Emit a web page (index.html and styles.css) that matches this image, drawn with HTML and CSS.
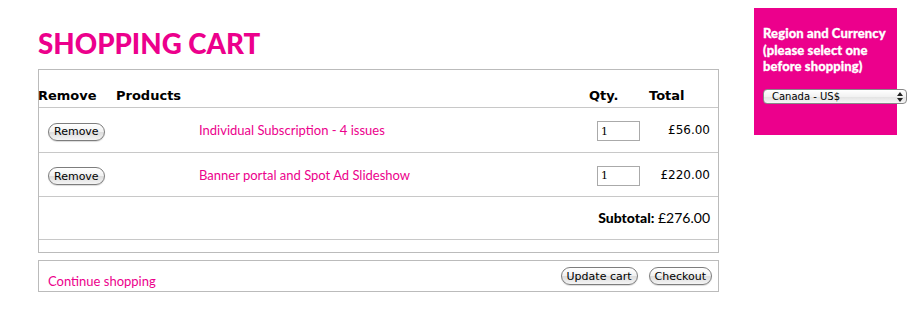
FILE: index.html
```html
<!DOCTYPE html>
<html lang="en">
<head>
  <meta charset="UTF-8" />
  <title>Shopping Cart</title>
  <link rel="stylesheet" href="styles.css">
</head>
<body>
  <div class="page">
    <div class="main">
      <h1 class="title">SHOPPING CART</h1>

      <div class="cart-box">
        <div class="cart-head">
          <span class="h-remove">Remove</span>
          <span class="h-products">Products</span>
          <span class="h-qty">Qty.</span>
          <span class="h-total">Total</span>
        </div>

        <div class="cart-row">
          <div class="c-remove"><button class="mac-btn">Remove</button></div>
          <div class="c-product"><a href="#">Individual Subscription - 4 issues</a></div>
          <div class="c-qty"><input type="text" value="1" /></div>
          <div class="c-total">£56.00</div>
        </div>

        <div class="cart-row">
          <div class="c-remove"><button class="mac-btn">Remove</button></div>
          <div class="c-product"><a href="#">Banner portal and Spot Ad Slideshow</a></div>
          <div class="c-qty"><input type="text" value="1" /></div>
          <div class="c-total">£220.00</div>
        </div>

        <div class="cart-subtotal">
          <strong>Subtotal:</strong> £276.00
        </div>
        <div class="cart-empty"></div>
      </div>

      <div class="actions-box">
        <a href="#" class="continue">Continue shopping</a>
        <div class="action-buttons">
          <button class="mac-btn">Update cart</button>
          <button class="mac-btn">Checkout</button>
        </div>
      </div>
    </div>

    <div class="sidebar">
      <p class="region-label">Region and Currency (please select one before shopping)</p>
      <div class="select-wrap">
        <select class="region-select">
          <option>Canada - US$</option>
        </select>
        <svg class="select-arrows" width="6" height="10" viewBox="0 0 6 10">
          <path d="M0 4 L3 0 L6 4 Z M0 6 L3 10 L6 6 Z" fill="#222"/>
        </svg>
      </div>
    </div>
  </div>
</body>
</html>
```

FILE: styles.css
```css
body {
  margin: 0;
  background: #fff;
  font-family: 'Lato', sans-serif;
  color: #000;
}
.page {
  display: flex;
  align-items: flex-start;
}
.main {
  margin-left: 38px;
  width: 681px;
}
.title {
  margin: 0;
  padding-top: 29px;
  height: 40px;
  font-size: 27.7px;
  font-weight: 900;
  line-height: 30px;
  color: #ec008c;
}
.cart-box {
  border: 1px solid #bbb;
}
.cart-head {
  display: flex;
  align-items: flex-end;
  height: 38px;
  border-bottom: 1px solid #c8c8c8;
  font-family: 'DejaVu Sans', sans-serif;
  font-weight: bold;
  font-size: 13px;
  line-height: 16px;
  padding-bottom: 3px;
  box-sizing: border-box;
}
.h-remove {
  margin-left: -1px;
  width: 78px;
}
.h-products {
  flex: 1;
}
.h-qty {
  width: 60px;
}
.h-total {
  width: 69px;
}
.cart-row {
  display: flex;
  align-items: center;
  height: 44px;
  border-bottom: 1px solid #c8c8c8;
}
.cart-row + .cart-row {
  height: 43px;
}
.c-remove {
  width: 160px;
  padding-left: 9px;
  box-sizing: border-box;
}
.c-product {
  flex: 1;
  font-size: 13px;
}
.c-product a {
  color: #ec008c;
  text-decoration: none;
}
.c-qty input {
  width: 35px;
  height: 16px;
  border: 1px solid #aaa;
  padding: 1px 3px;
  font-family: 'DejaVu Serif', serif;
  font-size: 11px;
  margin-right: 9px;
}
.c-total {
  width: 61px;
  text-align: right;
  padding-right: 8px;
  font-family: 'DejaVu Sans', sans-serif;
  font-size: 12px;
}
.cart-subtotal {
  height: 42px;
  line-height: 42px;
  text-align: right;
  padding-right: 8px;
  border-bottom: 1px solid #c8c8c8;
  font-size: 14px;
}
.cart-subtotal strong {
  font-weight: 900;
}
.cart-empty {
  height: 12px;
}
.actions-box {
  margin-top: 7px;
  border: 1px solid #bbb;
  height: 30px;
  display: flex;
  justify-content: space-between;
  align-items: flex-start;
  padding: 0 6px 0 9px;
}
.continue {
  color: #ec008c;
  text-decoration: none;
  font-size: 13px;
  margin-top: 12px;
}
.action-buttons {
  display: flex;
  gap: 11px;
  margin-top: 6px;
}
.mac-btn {
  font-family: 'DejaVu Sans', sans-serif;
  font-size: 11px;
  height: 18px;
  padding: 0 5px;
  border: 1px solid #7d7d7d;
  border-radius: 9px;
  background: linear-gradient(#fff, #f1f1f1 50%, #dcdcdc 51%, #f4f4f4);
  color: #000;
  line-height: 15px;
  box-shadow: 0 1px 1px rgba(0, 0, 0, 0.15);
}
.sidebar {
  margin-left: 35px;
  margin-top: 8px;
  width: 134px;
  height: 110px;
  background: #ec008c;
  padding: 17px 0 0 9px;
}
.region-label {
  margin: 0;
  width: 140px;
  color: #fff;
  font-weight: 900;
  font-size: 13px;
  line-height: 16.5px;
  letter-spacing: 0.1px;
  -webkit-text-stroke: 0.3px #fff;
}
.select-wrap {
  position: relative;
  margin-top: 14px;
  width: 144px;
}
.region-select {
  display: block;
  -webkit-appearance: none;
  appearance: none;
  width: 144px;
  height: 15px;
  font-family: 'DejaVu Sans', sans-serif;
  font-size: 10px;
  line-height: 13px;
  color: #000;
  border: 1px solid #888;
  border-radius: 4px;
  background: linear-gradient(#fff, #f2f2f2 50%, #e2e2e2 51%, #f6f6f6);
  padding: 0 0 0 8px;
}
.select-arrows {
  position: absolute;
  right: 4px;
  top: 3px;
}
```
